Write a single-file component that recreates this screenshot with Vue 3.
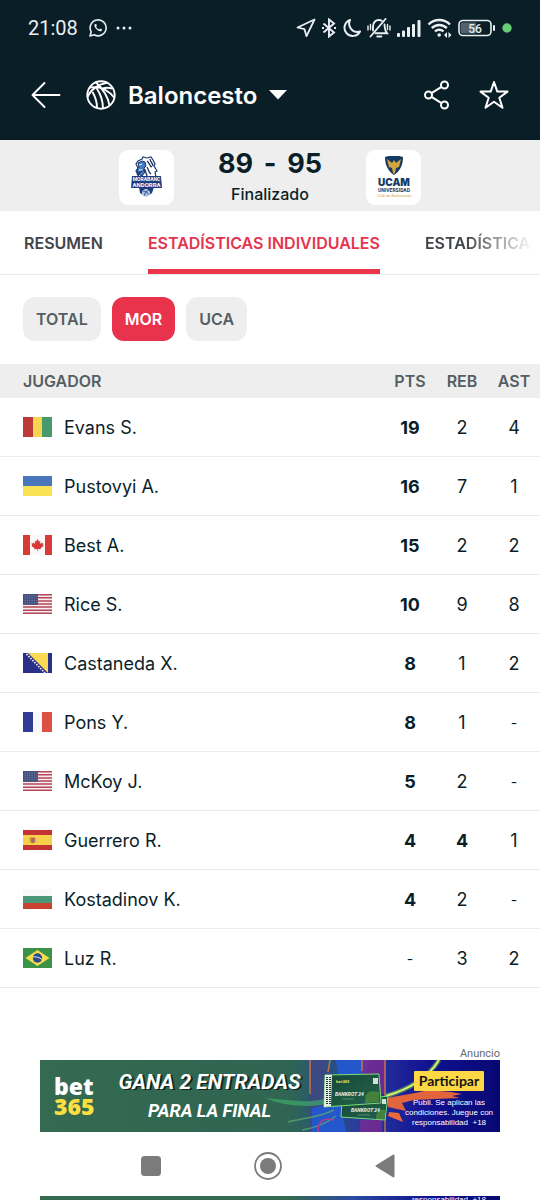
<script setup>
import { ref } from 'vue'

const tabs = ['RESUMEN', 'ESTADÍSTICAS INDIVIDUALES', 'ESTADÍSTICAS']
const filters = ['TOTAL', 'MOR', 'UCA']
const activeTab = ref(tabs[1])
const activeFilter = ref('MOR')

const players = [
  { name: 'Evans S.', flag: 'gn', stats: ['19', '2', '4'], top: [0] },
  { name: 'Pustovyi A.', flag: 'ua', stats: ['16', '7', '1'], top: [0] },
  { name: 'Best A.', flag: 'ca', stats: ['15', '2', '2'], top: [0] },
  { name: 'Rice S.', flag: 'us', stats: ['10', '9', '8'], top: [0] },
  { name: 'Castaneda X.', flag: 'ba', stats: ['8', '1', '2'], top: [0] },
  { name: 'Pons Y.', flag: 'fr', stats: ['8', '1', '-'], top: [0] },
  { name: 'McKoy J.', flag: 'us', stats: ['5', '2', '-'], top: [0] },
  { name: 'Guerrero R.', flag: 'es', stats: ['4', '4', '1'], top: [0, 1] },
  { name: 'Kostadinov K.', flag: 'bg', stats: ['4', '2', '-'], top: [0] },
  { name: 'Luz R.', flag: 'br', stats: ['-', '3', '2'], top: [] },
]
</script>

<template>
  <div class="page">
    <header class="top">
      <div class="status">
        <span class="clock">21:08</span>
        <svg class="whatsapp" width="18" height="18" viewBox="0 0 18 18" fill="none" stroke="#e9eff2" stroke-width="1.6">
          <path d="M1 17l1.200-4.200A8 8 0 1 1 5.200 15.800z" stroke-linejoin="round" />
          <path d="M6 5c-1 1-.8 2.500.8 4.500s4.200 3.700 5.700 2.400c.8-.7.6-1.400.2-1.600l-1.500-.8-1.100 1c-1.400-.5-2.500-1.600-3-2.900l.8-.9-.7-1.700z" fill="#e9eff2" stroke="none" />
        </svg>
        <svg class="dots" width="16" height="4" viewBox="0 0 16 4" fill="#e9eff2">
          <circle cx="2" cy="2" r="1.500" /><circle cx="8" cy="2" r="1.500" /><circle cx="14" cy="2" r="1.500" />
        </svg>
        <div class="system">
          <svg width="20" height="20" viewBox="0 0 20 20" fill="none" stroke="#e9eff2" stroke-width="1.800" stroke-linejoin="round">
            <path d="M18.500 1.500L1.500 9.500l7 1.700 2 7z" />
          </svg>
          <svg width="14" height="20" viewBox="0 0 14 20" fill="none" stroke="#e9eff2" stroke-width="1.900">
            <path d="M1.500 5.500l10.500 9L7 18.500v-17l5 4-10.500 9" />
            <path d="M0 10h2M12 10h2" />
          </svg>
          <svg width="19" height="20" viewBox="0 0 19 20" fill="none" stroke="#e9eff2" stroke-width="2" stroke-linejoin="round">
            <path d="M8 2a8.200 8.200 0 1 0 10 11.500A8.300 8.300 0 0 1 8 2z" />
          </svg>
          <svg width="24" height="20" viewBox="0 0 24 20" fill="none" stroke="#e9eff2" stroke-width="1.900" stroke-linecap="round">
            <path d="M18.500 1L3.500 18.500" />
            <path d="M6 12.500V8.500c0-4 2.500-6.500 6-6.500 1 0 2 .3 2.800.8M17.500 6.500c.4 3.500-.1 5.500 2.500 8.700H8.500" />
            <path d="M10.300 18.500h4" stroke-width="2" />
            <path d="M1 8v4M3.500 6.500v5M20.500 6.500v5M23 8v4" stroke-width="1.400" />
          </svg>
          <svg width="24" height="17" viewBox="0 0 24 17" fill="#e9eff2">
            <rect x="0" y="13" width="3" height="4" rx="1" /><rect x="5" y="10.500" width="3" height="6.500" rx="1" /><rect x="10" y="7" width="3" height="10" rx="1" /><rect x="15" y="4" width="3" height="13" rx="1" /><rect x="20.500" y="0" width="3" height="17" rx="1" />
          </svg>
          <svg width="25" height="20" viewBox="0 0 25 20" fill="none" stroke="#e9eff2" stroke-width="2.400">
            <path d="M1.500 6.500a15 15 0 0 1 21.500 0M4.800 10.200a10.500 10.500 0 0 1 15 0M8 13.500a6 6 0 0 1 8.500 0" />
            <circle cx="12.200" cy="17" r="1.800" fill="#e9eff2" stroke="none" />
            <path d="M17 17l3-3v6zM24.500 17l-3-3v6z" fill="#e9eff2" stroke="none" />
          </svg>
          <svg width="38" height="18" viewBox="0 0 38 18">
            <rect x="1" y="1.500" width="32" height="15" rx="4" fill="none" stroke="#e9eff2" stroke-width="1.600" />
            <path d="M4 3.500h14v11H4a2 2 0 0 1-1.500-2V5.500a2 2 0 0 1 1.500-2z" fill="#52616a" />
            <rect x="35" y="6" width="2" height="6" rx="1" fill="#e9eff2" />
            <text x="17" y="13.500" text-anchor="middle" class="battery-text">56</text>
          </svg>
          <svg width="10" height="10" viewBox="0 0 10 10"><circle cx="5" cy="5" r="4.700" fill="#67cf73" /></svg>
        </div>
      </div>

      <div class="appbar">
        <button class="icon-button" type="button" aria-label="Atrás">
          <svg width="30" height="28" viewBox="0 0 30 28" fill="none" stroke="#fff" stroke-width="1.900" stroke-linecap="round" stroke-linejoin="round">
            <path d="M13.500 2L1.500 14l12 12M2 14h26.500" />
          </svg>
        </button>
        <button class="sport" type="button">
          <svg width="30" height="30" viewBox="0 0 30 30" fill="none" stroke="#fff" stroke-width="1.900">
            <circle cx="15" cy="15" r="13.700" />
            <path d="M4 7.500C13 6 22 9.500 28.500 18" />
            <path d="M10 2.500C16 8 22 17 23.500 25.500" />
            <path d="M21 2.800C13 4 5 9 1.500 17" />
            <path d="M10.500 8C14.500 14 17 21 17 28.500" />
            <path d="M6.500 12C9.500 17 11 22 11 28" />
            <path d="M16.500 8.500c3.500-1 6.500-1 9.500 0" />
          </svg>
          <span>Baloncesto</span>
          <svg width="18" height="10" viewBox="0 0 18 10"><path d="M0 0h18L9 9.500z" fill="#fff" /></svg>
        </button>
        <button class="icon-button share" type="button" aria-label="Compartir">
          <svg width="26" height="30" viewBox="0 0 26 30" fill="none" stroke="#fff" stroke-width="2">
            <circle cx="4.500" cy="15" r="3.500" /><circle cx="20.500" cy="5" r="3.500" /><circle cx="20.500" cy="25" r="3.500" />
            <path d="M7.500 13.200l10-6.300M7.500 16.800l10 6.300" />
          </svg>
        </button>
        <button class="icon-button" type="button" aria-label="Favorito">
          <svg width="30" height="30" viewBox="0 0 30 30" fill="none" stroke="#fff" stroke-width="2" stroke-linejoin="round">
            <path d="M15 2l3.300 9.600h10.200l-8.200 6.200 3.200 10L15 21.700l-8.500 6.100 3.200-10-8.200-6.200h10.200z" />
          </svg>
        </button>
      </div>
    </header>

    <section class="score">
      <div class="badge">
        <svg width="33" height="42" viewBox="-1 0 33 42" role="img" aria-label="MoraBanc Andorra">
          <path d="M7 5l4-2 1-2 4 1 4-1 2 3 2 4-1 2 3 5-2 1 1 5H8L5 15l2-3-2-4z" fill="#fff" stroke="#21386f" stroke-width="1.200" />
          <path d="M7 7l4-2 3 1 1 4-2 2 1 4-3 4-4-2-1-5 2-2z" fill="#3c7fc8" stroke="#1b2e66" />
          <path d="M16 5c3 2 2 5 5 6M16 11c2 3 1 5 4 7M19 3c0 3 3 4 3 7M6 19c3-2 3-5 8-5l2 6" fill="none" stroke="#1b2e66" stroke-width="1.300" />
          <path d="M8 9l3-1M8 14h4" stroke="#fff" />
          <path d="M1 20h29l1 12H0z" fill="#1e3c80" />
          <path d="M8 31h15l-2 6-6 4-6-4z" fill="#1e3c80" />
          <circle cx="15" cy="37" r="3.500" fill="#9bb8dc" stroke="#fff" stroke-width=".7" />
          <path d="M12 35c3 0 5 2 6 4M18 34c-3 1-4 3-5 6" fill="none" stroke="#1e3c80" stroke-width=".7" />
          <text x="15.500" y="25" text-anchor="middle" class="logo-small light">MORABANC</text>
          <text x="15.500" y="31" text-anchor="middle" class="logo-name light">ANDORRA</text>
        </svg>
      </div>
      <div class="result">
        <p class="points"><span>89</span><span>-</span><span>95</span></p>
        <p class="state">Finalizado</p>
      </div>
      <div class="badge">
        <svg width="36" height="42" viewBox="0 0 36 42" role="img" aria-label="UCAM Universidad Club de Baloncesto">
          <path d="M9 1c6-2 12-2 18 0 0 8-3 14-9 18C12 15 9 9 9 1z" fill="#173a63" />
          <path d="M11 3l5 4 2-3 2 3 5-4-2 8-3 1-1 5-1 1-1-1-1-5-3-1z" fill="#d5a63e" />
          <text x="18" y="30" text-anchor="middle" class="ucam">UCAM</text>
          <text x="18" y="36" text-anchor="middle" class="logo-small navy">UNIVERSIDAD</text>
          <text x="18" y="41" text-anchor="middle" class="club">Club de Baloncesto</text>
        </svg>
      </div>
    </section>

    <nav class="tabs" aria-label="Secciones">
      <button
        v-for="tab in tabs"
        :key="tab"
        type="button"
        class="tab"
        :class="{ active: tab === activeTab }"
        @click="activeTab = tab"
      >{{ tab }}</button>
    </nav>

    <div class="filters">
      <button
        v-for="item in filters"
        :key="item"
        type="button"
        class="chip"
        :class="{ active: item === activeFilter }"
        @click="activeFilter = item"
      >{{ item }}</button>
    </div>

    <table class="stats">
      <thead>
        <tr>
          <th class="player" scope="col">JUGADOR</th>
          <th scope="col">PTS</th>
          <th scope="col">REB</th>
          <th scope="col">AST</th>
        </tr>
      </thead>
      <tbody>
        <tr v-for="p in players" :key="p.name">
          <td class="player">
            <div class="who">
              <svg class="flag" width="29" height="20" viewBox="0 0 29 20" aria-hidden="true">
                <g v-if="p.flag === 'gn'">
                  <rect width="10" height="20" fill="#bd3a38" /><rect x="10" width="9" height="20" fill="#f6d550" /><rect x="19" width="10" height="20" fill="#469a6c" />
                </g>
                <g v-else-if="p.flag === 'ua'">
                  <rect width="29" height="10" fill="#4a76bd" /><rect y="10" width="29" height="10" fill="#fae256" />
                </g>
                <g v-else-if="p.flag === 'ca'">
                  <rect width="29" height="20" fill="#fbf8f8" /><rect width="7" height="20" fill="#d83a36" /><rect x="22" width="7" height="20" fill="#d83a36" />
                  <path d="M14.500 4l1.500 2.500 1.300-.5-.4 3 1.800-1.500.4 1 1.400-.3-.6 2 .9.600-3.300 2.500.3 1-3-.4V16h-.6v-2.100l-3 .4.300-1L8.200 10.800l.9-.6-.6-2 1.400.3.400-1L12.100 9l-.4-3 1.300.5z" fill="#d83a36" />
                </g>
                <g v-else-if="p.flag === 'us'">
                  <rect width="29" height="20" fill="#f5eef0" />
                  <path d="M0 .75h29M0 3.830h29M0 6.910h29M0 10h29M0 13.080h29M0 16.160h29M0 19.240h29" stroke="#b54557" stroke-width="1.540" />
                  <rect width="15" height="10.800" fill="#44517f" />
                  <path d="M1.500 2h13M1.500 4.200h13M1.500 6.400h13M1.500 8.600h13" stroke="#8590b0" stroke-width=".8" stroke-dasharray="1 1.400" />
                </g>
                <g v-else-if="p.flag === 'ba'">
                  <rect width="29" height="20" fill="#2a2f88" /><path d="M5 0h20v20z" fill="#f9d954" />
                  <path d="M3.500 1l18.500 19" stroke="#e9ebf5" stroke-width="1.800" stroke-dasharray="1.600 1.200" />
                </g>
                <g v-else-if="p.flag === 'fr'">
                  <rect width="29" height="20" fill="#f8f8f8" /><rect width="10" height="20" fill="#2f3c92" /><rect x="19" width="10" height="20" fill="#dd5145" />
                </g>
                <g v-else-if="p.flag === 'es'">
                  <rect width="29" height="20" fill="#c33432" /><rect y="5" width="29" height="10" fill="#f8d14c" />
                  <path d="M7.500 7.500h4.500v3.500a2.200 2.200 0 0 1-4.500 0z" fill="#bd6a45" /><path d="M6.500 8v5M13 8v5" stroke="#d9b070" /><circle cx="9.800" cy="10.500" r="1" fill="#8a6e9b" />
                </g>
                <g v-else-if="p.flag === 'bg'">
                  <rect width="29" height="20" fill="#f9f9f9" /><rect y="7" width="29" height="7" fill="#4a9779" /><rect y="14" width="29" height="6" fill="#c8422f" />
                </g>
                <g v-else>
                  <rect width="29" height="20" fill="#3c9247" /><path d="M14.500 2l12 8-12 8-12-8z" fill="#f6dc4a" /><circle cx="14.500" cy="10" r="4.700" fill="#2b4a8e" />
                  <path d="M10 9c3-.6 6.500.3 9 2.500" fill="none" stroke="#dfe6ee" stroke-width="1" />
                </g>
              </svg>
              <span>{{ p.name }}</span>
            </div>
          </td>
          <td
            v-for="(value, i) in p.stats"
            :key="i"
            :class="{ best: p.top.includes(i), empty: value === '-' }"
          >{{ value }}</td>
        </tr>
      </tbody>
    </table>

    <aside class="promo">
      <p class="ad-label">Anuncio</p>
      <div class="ad">
        <svg class="ad-art" viewBox="0 0 460 72" preserveAspectRatio="none" aria-hidden="true">
          <defs>
            <linearGradient id="adBase" x1="0" x2="1" y1="0" y2="0">
              <stop offset="0" stop-color="#346a50" /><stop offset=".54" stop-color="#2f6552" /><stop offset=".62" stop-color="#28557a" /><stop offset=".7" stop-color="#2b3aa0" /><stop offset=".85" stop-color="#10108f" /><stop offset="1" stop-color="#080873" />
            </linearGradient>
            <linearGradient id="adCard" x1="0" x2="1" y1="0" y2="1">
              <stop offset="0" stop-color="#17453a" /><stop offset=".7" stop-color="#1f5c43" /><stop offset="1" stop-color="#2c3f9c" />
            </linearGradient>
          </defs>
          <rect width="460" height="72" fill="url(#adBase)" />
          <path d="M268 0h18l8 30-12 42h-12z" fill="#49408c" opacity=".6" />
          <path d="M296 0h34l-4 14h-28zM272 48l28-6 6 30h-34z" fill="#2557cc" />
          <path d="M322 0h24v34h-24zM320 60h22v12h-22z" fill="#7b2b91" opacity=".8" />
          <path d="M225 38c25 2 45 6 62 0v6c-20 4-44 2-62-6z" fill="#3fa968" opacity=".7" />
          <path d="M270 0v34M345 0v72M290 0l-2 12M322 0v11" stroke="#d98334" stroke-width="1.500" fill="none" opacity=".8" />
          <path d="M248 62c14-4 30-4 46-12M262 70c14-2 26-8 34-14" stroke="#58a66c" stroke-width="1.500" fill="none" opacity=".8" />
          <path d="M278 72c0-12 6-14 16-12" stroke="#b53a8d" stroke-width="1.500" fill="none" />
          <path d="M346 36c24-7 42-18 53-36" stroke="#6ec745" stroke-width="5" fill="none" opacity=".5" />
          <path d="M346 36c24-7 42-18 53-36" stroke="#d8f36b" stroke-width="2" fill="none" />
          <path d="M347 38l28-5 14-3 22 2 11 2-10 2 8 2-24 1-22 1-12 3 4 8-18-4z" fill="#e2643c" />
          <path d="M349 52l10 1 4 9-15-6" fill="#eb6a38" />
          <g stroke="#78df76" stroke-width="1">
            <path d="M302 42l46-6-3 24-44-3z" fill="url(#adCard)" />
            <path d="M285 15l54-1 2 29-57 4z" fill="url(#adCard)" />
          </g>
          <path d="M285 15h7l-1 31-7 1z" fill="#e9efe9" />
          <path d="M287 17v27M290 17v27" stroke="#18392e" stroke-width="2" stroke-dasharray="1 1" />
          <path d="M325 43c0-11 4-13 14-11v10zM336 59c0-8 3-10 9-9v9z" fill="#45803d" />
          <rect x="333" y="18" width="5" height="6" fill="#d5dfdc" /><rect x="342" y="39" width="4" height="5" fill="#d5dfdc" />
          <text x="296" y="23" class="art-brand">bet365</text>
          <text x="295" y="36" class="art-title">BANKROT 24</text>
          <text x="311" y="52" class="art-title">BANKROT 24</text>
          <path d="M302 39h12M318 55h12" stroke="#719e8c" stroke-width=".7" />
        </svg>
        <div class="ad-content">
          <div class="brand"><span>bet</span><span class="yellow">365</span></div>
          <div class="claim"><span class="claim-main">GANA 2 ENTRADAS</span><span class="claim-sub">PARA LA FINAL</span></div>
          <div class="action">
            <a href="#" class="cta">Participar</a>
            <p>Publi. Se aplican las condiciones. Juegue con responsabilidad&nbsp; +18</p>
          </div>
        </div>
      </div>
    </aside>

    <nav class="system-nav" aria-label="Sistema">
      <button type="button" aria-label="Recientes">
        <svg width="28" height="28" viewBox="0 0 28 28"><rect x="4" y="4" width="20" height="20" rx="3.500" fill="#7b7b7b" /></svg>
      </button>
      <button type="button" aria-label="Inicio">
        <svg width="28" height="28" viewBox="0 0 28 28"><circle cx="14" cy="14" r="13" fill="none" stroke="#7b7b7b" stroke-width="1.800" /><circle cx="14" cy="14" r="8" fill="#7b7b7b" /></svg>
      </button>
      <button type="button" aria-label="Volver">
        <svg width="28" height="28" viewBox="0 0 28 28"><path d="M5.500 14L22.500 3.500v21z" fill="#7b7b7b" stroke="#7b7b7b" stroke-width="2" stroke-linejoin="round" /></svg>
      </button>
    </nav>
    <div class="next-ad" aria-hidden="true"><span>responsabilidad&nbsp; +18</span></div>
  </div>
</template>

<style>
body {
  margin: 0;
  background: #fff;
}
</style>

<style scoped>
.page {
  display: flex;
  flex-direction: column;
  min-height: 100vh;
  overflow: hidden;
  color: #0a1e28;
  background: #fff;
  font-family: Inter, "Liberation Sans", sans-serif;
}
p {
  margin: 0;
}
svg {
  display: block;
  flex: none;
}
button {
  margin: 0;
  padding: 0;
  border: 0;
  background: none;
  color: inherit;
  font: inherit;
}
.top {
  background: #0a1e28;
  color: #fff;
}
.status {
  display: flex;
  align-items: center;
  height: 44px;
  padding: 6px 28px 0;
}
.clock {
  font: 400 20px/24px Roboto, sans-serif;
  color: #e9eff2;
}
.whatsapp {
  margin-left: 11px;
}
.dots {
  margin-left: 9px;
}
.system {
  display: flex;
  align-items: center;
  gap: 6px;
  margin-left: auto;
}
.battery-text {
  font: 500 12px Roboto, sans-serif;
  fill: #e9eff2;
}
.appbar {
  display: flex;
  align-items: center;
  height: 90px;
  padding: 0 31px;
}
.sport {
  display: flex;
  align-items: center;
  gap: 12px;
  margin-left: 25px;
  font-size: 24px;
  font-weight: 600;
}
.share {
  margin-left: auto;
  margin-right: 29px;
}
.score {
  box-sizing: border-box;
  display: flex;
  align-items: center;
  justify-content: center;
  gap: 44px;
  height: 71px;
  padding-top: 3px;
  background: #eee;
}
.badge {
  display: grid;
  place-items: center;
  width: 55px;
  height: 55px;
  border-radius: 9px;
  background: #fff;
}
.result {
  width: 104px;
  text-align: center;
}
.points {
  display: flex;
  justify-content: space-between;
  font-size: 27px;
  line-height: 34px;
  font-weight: 700;
}
.state {
  font-size: 16px;
  line-height: 26px;
  font-weight: 500;
}
.logo-small {
  font: 700 5px Roboto, sans-serif;
}
.logo-name {
  font: 700 6px Roboto, sans-serif;
}
.light {
  fill: #fff;
}
.navy {
  fill: #173a63;
}
.ucam {
  font: 900 10px Inter, sans-serif;
  fill: #173a63;
}
.club {
  font: 400 4px "Liberation Sans", sans-serif;
  fill: #d5a63e;
}
.art-brand {
  font: 700 4px "Open Sans", sans-serif;
  fill: #dfe86a;
}
.art-title {
  font: italic 700 5px Roboto, sans-serif;
  fill: #e9f2ee;
}
.tabs {
  display: flex;
  gap: 45px;
  height: 63px;
  padding: 0 24px;
  overflow: hidden;
  border-bottom: 1px solid #e8eaeb;
}
.tab {
  flex: none;
  border-top: 5px solid transparent;
  border-bottom: 5px solid transparent;
  font-size: 16px;
  font-weight: 600;
  color: #414448;
}
.tab:last-child {
  -webkit-mask-image: linear-gradient(to right, #000 40px, transparent 108px);
  mask-image: linear-gradient(to right, #000 40px, transparent 108px);
}
.tab.active {
  color: #e5334e;
  background: linear-gradient(#e93449, #e93449) bottom / 100% 5px no-repeat border-box;
}
.filters {
  display: flex;
  gap: 11px;
  padding: 22px 23px 23px;
}
.chip {
  height: 44px;
  padding: 0 13px;
  border-radius: 12px;
  background: #eee;
  color: #555e62;
  font-size: 16px;
  font-weight: 600;
}
.chip.active {
  background: #e9334d;
  color: #fff;
}
.stats {
  width: 100%;
  border-collapse: collapse;
  table-layout: fixed;
}
.stats th,
.stats td {
  width: 52px;
  padding: 0;
  text-align: center;
}
.stats th {
  height: 34px;
  background: #eee;
  color: #555e62;
  font-size: 16px;
  font-weight: 600;
}
.stats .player {
  width: auto;
  padding-left: 23px;
  text-align: left;
}
.stats td {
  height: 58px;
  border-bottom: 1px solid #e8eaeb;
  font-size: 18px;
}
.stats .best {
  font-weight: 700;
}
.stats .empty {
  font-size: 14px;
}
.who {
  display: flex;
  align-items: center;
  gap: 12px;
}
.promo {
  margin: auto 40px 0;
}
.ad-label {
  font: 400 11px/12px Roboto, sans-serif;
  color: #666b6e;
  text-align: right;
}
.ad {
  position: relative;
}
.ad-art {
  position: absolute;
  inset: 0;
  width: 100%;
  height: 100%;
}
.ad-content {
  position: relative;
  display: flex;
  align-items: center;
  height: 72px;
  padding: 0 5px 0 14px;
  color: #fff;
}
.brand {
  display: flex;
  flex-direction: column;
  font: 800 23px/20px "Open Sans", sans-serif;
}
.yellow {
  color: #fbdf43;
}
.claim {
  display: flex;
  flex-direction: column;
  align-items: center;
  margin-left: 24px;
  font-family: Roboto, sans-serif;
  font-style: italic;
  font-weight: 700;
  white-space: nowrap;
}
.claim-main {
  font-size: 21px;
  line-height: 30px;
  text-shadow: 2px 1px 0 #10251d;
}
.claim-sub {
  font-size: 18px;
  line-height: 28px;
}
.action {
  display: flex;
  flex-direction: column;
  align-items: center;
  gap: 7px;
  width: 92px;
  padding-top: 6px;
  margin-left: auto;
  text-align: center;
}
.cta {
  padding: 0 5px;
  border-radius: 1px;
  background: #fdd744;
  color: #141414;
  font: 700 14px/20px Lato, sans-serif;
  text-decoration: none;
}
.action p {
  font: 400 8px/10px "Liberation Sans", sans-serif;
}
.system-nav {
  box-sizing: border-box;
  display: flex;
  justify-content: center;
  height: 64px;
  padding: 4px 4px 0 0;
  background: #fff;
}
.system-nav button {
  display: grid;
  place-items: center;
  width: 117px;
}
.next-ad {
  display: flex;
  justify-content: flex-end;
  height: 4px;
  margin: 0 40px;
  padding-right: 14px;
  overflow: hidden;
  background: linear-gradient(to right, #346a50 54%, #2b4aa0 68%, #10108f 85%, #080873);
  color: #fff;
  font: 400 8px/8px "Liberation Sans", sans-serif;
}
</style>
